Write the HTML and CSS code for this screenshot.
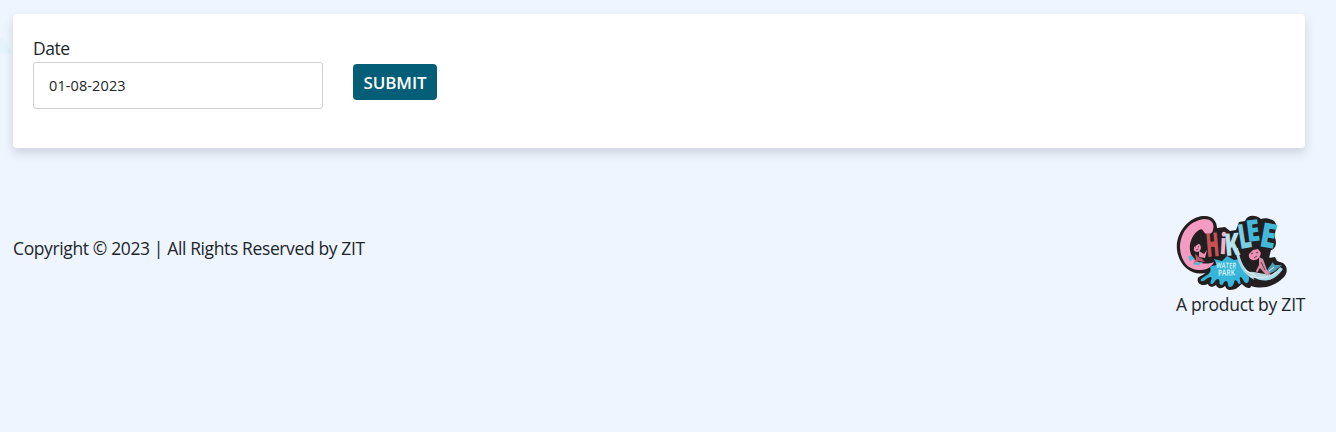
FILE: index.html
```html
<!DOCTYPE html>
<html lang="en">
<head>
<meta charset="utf-8">
<title>Report</title>
<link rel="stylesheet" href="styles.css">
</head>
<body>
<svg class="backdrop" width="13" height="20" viewBox="0 0 13 20"><path d="M0 4L2 3 13 19.500H0Z" fill="#e5f3fc"/></svg>
<main class="card">
  <form class="form">
    <div class="field">
      <label class="label" for="date">Date</label>
      <input class="input" id="date" type="text" value="01-08-2023">
    </div>
    <button class="submit" type="button"><span>SUBMIT</span></button>
  </form>
</main>
<footer class="footer">
  <p class="copyright">Copyright © 2023 | All Rights Reserved by ZIT</p>
  <div class="brand">
    <svg class="logo" viewBox="0 0 111 76" role="img" aria-label="Chiklee Water Park">
      <!-- dark silhouette -->
      <path fill="#231f20" d="M1 35C-1 18 13 2 27 1C36 0 41 6 41 13L49 12 54 16 60 15 63 7 69 6C71 0 79-1 85 4C91 2 100 5 100 10C101 14 98 18 99 23C101 27 100 34 95 35L93 43 99 42 101 46 107 48C112 52 112 58 107 63C99 71 87 75 75 71C75 74 70 74 66 69C62 72 60 75 54 75C51 75 50 73 49 71C45 75 41 73 40 70C36 73 33 72 32 69C26 72 20 68 22 63C23 61 28 60 29 58C16 61 3 51 1 35Z"/>
      <!-- pink C -->
      <path fill="#f49bc1" d="M37 15C39 8 35 4 28 4C13 6 4 18 4 33C5 49 15 56 25 55C32 55 36 51 38 47C30 50 20 49 16 41C11 33 15 20 23 15C28 12 27 20 32 19C35 19 37 17 37 15Z"/>
      <!-- girl on the C -->
      <path fill="#ed91b4" d="M16 30C19 25 25 28 25 33C24 38 19 38 17 34ZM23 36L28 39 31 35 29 43 23 42Z"/>
      <path fill="#231f20" d="M14 34C14 26 20 24 24 28L18 32 18 37Z"/>
      <path fill="#c4556b" d="M19 39L25 43 29 47 22 46 17 49 20 44Z"/>
      <path fill="#54b9d2" d="M12 42C15 39 17 42 19 44L14 46ZM17 48L27 47 23 50 19 50Z"/>
      <path fill="none" stroke="#303033" stroke-width=".7" d="M19 32h1M22 32h1M20 35l2-1M21 41l4 2"/>
      <!-- splash -->
      <path fill="#35b5d9" d="M38 44L46 46 51 41 58 45 64 44C65 51 66 55 72 60C74 63 73 69 70 68C67 67 67 62 64 62C63 65 66 69 64 69C61 69 62 65 59 65C58 66 58 72 54 72C51 72 53 66 50 66C47 66 48 70 45 70C42 69 45 65 42 64C39 64 38 70 35 69C33 67 37 64 35 62C31 62 29 67 25 66C23 63 32 61 34 57C36 54 32 52 36 51L41 50Z"/>
      <!-- swoosh under the K -->
      <path fill="#231f20" d="M62 37C64 47 67 57 74 63L82 60 103 57 96 45 87 36Z"/>
      <path fill="#a9dbe7" d="M58 33L62 33C64 47 69 56 78 60C88 65 97 61 104 52L107 54C101 66 85 70 75 63C65 57 62 46 58 33Z"/>
      <path fill="#231f20" d="M77 62C89 69 100 65 107 54C107 65 94 71 80 68Z"/>
      <path fill="#b6d4dc" d="M70 57C79 56 87 60 95 59C87 65 79 63 74 61Z"/>
      <path fill="#4c9fb5" d="M91 57C92 51 96 51 96 47L99 50 106 50C101 53 99 58 91 59Z"/>
      <path fill="none" stroke="#e5f1f5" stroke-width="1" d="M74 61C84 65 96 61 100 57M69 55L80 61M93 56L98 52"/>
      <!-- mermaid -->
      <path fill="#ed91b4" d="M73 36C75 32 81 31 84 34C86 39 84 44 79 45C75 46 72 43 73 39Z"/>
      <path fill="#d98aa5" d="M83 42L87 44 91 55 95 58 90 60 84 53 81 58 80 56 83 50Z"/>
      <path fill="#231f20" d="M71 35C72 29 80 27 84 30C88 32 87 37 86 39L82 34 77 35 73 39Z"/>
      <path fill="none" stroke="#303033" stroke-width=".8" d="M75 39l2-1M80 38l2-1M78 43l3-2M85 47l4 8"/>
      <g class="letters">
        <text transform="translate(31 42) rotate(-5)" font-size="33" textLength="13" lengthAdjust="spacingAndGlyphs" fill="#c95055">H</text>
        <text transform="translate(43.500 39) rotate(3)" font-size="29" textLength="6.500" lengthAdjust="spacingAndGlyphs" fill="#f0b4cb">i</text>
        <text transform="translate(49.500 41) rotate(-5)" font-size="31" textLength="15" lengthAdjust="spacingAndGlyphs" fill="#b5e3ee">K</text>
        <text transform="translate(64 34) rotate(-9)" font-size="34" textLength="13" lengthAdjust="spacingAndGlyphs" fill="#7acfe4">L</text>
        <text transform="translate(71.500 27) rotate(-7)" font-size="30" textLength="13.500" lengthAdjust="spacingAndGlyphs" fill="#42b9d9">E</text>
        <text transform="translate(82.500 31) rotate(10)" font-size="34" textLength="16" lengthAdjust="spacingAndGlyphs" fill="#42b9d9">E</text>
      </g>
      <g class="tagline">
        <text transform="translate(40 53) rotate(2)" font-size="8" textLength="20" lengthAdjust="spacingAndGlyphs">WATER</text>
        <text transform="translate(42 61) rotate(-2)" font-size="8.500" textLength="17" lengthAdjust="spacingAndGlyphs">PARK</text>
      </g>
    </svg>
    <p class="product">A product by ZIT</p>
  </div>
</footer>
</body>
</html>
```
FILE: styles.css
```css
* { box-sizing: border-box; }
body {
  margin: 0;
  padding: 14px 31px 0 13px;
  min-height: 432px;
  background: #eef5ff;
  color: #212529;
  font-family: "Segoe UI", "Open Sans", "Noto Sans", sans-serif;
  font-size: 17.5px;
  line-height: 27px;
}
p { margin: 0; }
.backdrop { position: absolute; left: 0; top: 34px; z-index: -1; }
.card {
  height: 134px;
  padding: 21px 20px;
  background: #fff;
  border-radius: 4px;
  box-shadow: 0 5px 11px rgba(0, 0, 0, .14);
}
.form { display: flex; align-items: flex-start; gap: 30px; }
.field { display: flex; flex-direction: column; width: 290px; }
.label { width: max-content; letter-spacing: -.5px; }
.input {
  height: 47px;
  padding: 0 15px;
  border: 1px solid #ced0d4;
  border-radius: 3px;
  background: #fff;
  color: #212529;
  font: 14.5px "Segoe UI", "Open Sans", "Noto Sans", sans-serif;
  letter-spacing: .1px;
}
.submit {
  display: flex;
  align-items: center;
  justify-content: center;
  width: 84px;
  height: 36px;
  margin-top: 29px;
  padding: 0;
  border: 0;
  border-radius: 4px;
  background: #055e78;
  color: #fff;
  font: 600 17px "Segoe UI", "Open Sans", "Noto Sans", sans-serif;
}
.submit span { letter-spacing: -.1px; }
.footer {
  display: flex;
  justify-content: space-between;
  align-items: center;
  padding-top: 67px;
}
.copyright { padding-bottom: 37px; letter-spacing: -.38px; }
.brand { width: 129px; }
.logo { display: block; width: 111px; height: 76px; overflow: visible; }
.product { white-space: nowrap; letter-spacing: -.25px; }
.letters { font-family: "Open Sans", sans-serif; font-weight: 800; }
.tagline { font-family: "Open Sans", sans-serif; font-weight: 600; fill: #d9f3f8; }
```
